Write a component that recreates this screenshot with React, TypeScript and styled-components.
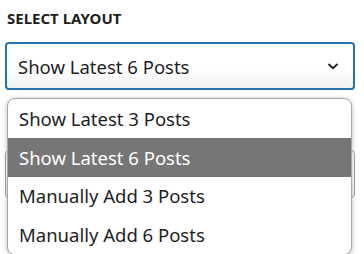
import React from "react";
import styled, { createGlobalStyle } from "styled-components";

const Global = createGlobalStyle`
  html, body { margin: 0; padding: 0; background: #ffffff; }
  body { font-family: "Noto Sans", "Open Sans", sans-serif; color: #1e1e1e; }
  * { box-sizing: border-box; }
`;

const Panel = styled.div`
  width: 364px;
  height: 254px;
  overflow: hidden;
  padding: 10px 9px 0 5px;
  display: flex;
  flex-direction: column;
`;

const Label = styled.div`
  font-size: 15px;
  font-weight: 700;
  padding-left: 2px;
  line-height: 16px;
  margin-bottom: 16px;
  color: #1e1e1e;
`;

const Field = styled.div`
  position: relative;
`;

const Gap = styled.div<{ $h: number }>`
  height: ${(p) => p.$h}px;
  flex: none;
`;

const SelectBox = styled.div<{ $focused?: boolean }>`
  height: 48px;
  flex: none;
  display: flex;
  align-items: center;
  justify-content: space-between;
  padding: 0 13px 0 11px;
  border-radius: 4px;
  border: ${(p) => (p.$focused ? "2px solid #2271b1" : "1px solid #a7a7a7")};
  background: linear-gradient(#ffffff 60%, #f2f2f2);
  font-size: 18.5px;
  color: #1e1e1e;
`;

const Chevron = styled.svg`
  width: 14px;
  height: 14px;
  flex: none;
  margin-left: auto;
`;

const Menu = styled.ul`
  position: absolute;
  top: calc(100% + 8px);
  left: 2px;
  right: 3px;
  margin: 0;
  padding: 0;
  list-style: none;
  background: #ffffff;
  border: 1px solid #a9a9a9;
  border-radius: 8px;
  overflow: hidden;
  box-shadow: 0 1px 5px rgba(0, 0, 0, 0.28);
  z-index: 2;
`;

const Option = styled.li<{ $active?: boolean }>`
  height: 38.75px;
  display: flex;
  align-items: center;
  padding-left: 11px;
  font-size: 18.5px;
  background: ${(p) => (p.$active ? "#767676" : "transparent")};
  color: ${(p) => (p.$active ? "#ffffff" : "#1e1e1e")};
`;

const options = [
  "Show Latest 3 Posts",
  "Show Latest 6 Posts",
  "Manually Add 3 Posts",
  "Manually Add 6 Posts",
];

const ChevronIcon = () => (
  <Chevron viewBox="0 0 14 14">
    <path d="M2.5 5 L7 9.2 L11.5 5" fill="none" stroke="#1e1e1e" strokeWidth="1.8" />
  </Chevron>
);

export default function App() {
  return (
    <>
      <Global />
      <Panel>
        <Label>SELECT LAYOUT</Label>
        <Field>
          <SelectBox $focused>
            <span>Show Latest 6 Posts</span>
            <ChevronIcon />
          </SelectBox>
          <Menu>
            {options.map((o) => (
              <Option key={o} $active={o === "Show Latest 6 Posts"}>
                {o}
              </Option>
            ))}
          </Menu>
        </Field>
        <Gap $h={60} />
        <SelectBox>
          <ChevronIcon />
        </SelectBox>
      </Panel>
    </>
  );
}
